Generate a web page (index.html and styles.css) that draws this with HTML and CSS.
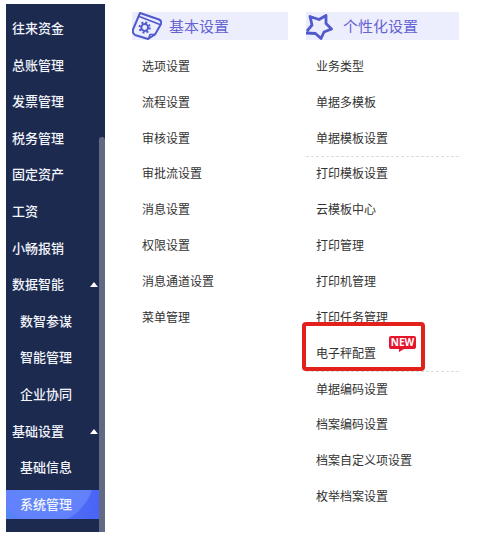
FILE: index.html
```html
<!DOCTYPE html>
<html lang="zh-CN">
<head>
<meta charset="utf-8">
<title>系统管理</title>
<link rel="stylesheet" href="styles.css">
</head>
<body>
<nav class="sidebar">
  <ul class="menu">
    <li><a href="#">往来资金</a></li>
    <li><a href="#">总账管理</a></li>
    <li><a href="#">发票管理</a></li>
    <li><a href="#">税务管理</a></li>
    <li><a href="#">固定资产</a></li>
    <li><a href="#">工资</a></li>
    <li><a href="#">小畅报销</a></li>
    <li><a href="#" class="group">数据智能</a></li>
    <li><a href="#" class="child">数智参谋</a></li>
    <li><a href="#" class="child">智能管理</a></li>
    <li><a href="#" class="child">企业协同</a></li>
    <li><a href="#" class="group">基础设置</a></li>
    <li><a href="#" class="child">基础信息</a></li>
    <li><a href="#" class="child active">系统管理</a></li>
  </ul>
  <div class="scrollbar"></div>
</nav>
<main class="panel">
  <section class="column">
    <h2 class="heading">
      <svg class="icon" viewBox="0 0 30 28" fill="none" stroke="#5059ce" stroke-width="2" stroke-linejoin="round">
        <path d="M8 1 L27 7.5 Q30 9 29 12 L23 22.5 L16 27 L3 23 Q0 21 1 17.5 Z"/>
        <path d="M6 4 L28 12.5" stroke-width="1.8"/>
        <path d="M16.500 27 L18 22.500 L23 22.500" stroke-width="1.6"/>
        <circle cx="12.700" cy="15.500" r="3.400" stroke-width="2"/>
        <circle cx="12.700" cy="15.500" r="5.100" stroke-width="2" stroke-dasharray="2 2.005"/>
      </svg>
      基本设置
    </h2>
    <ul class="list">
      <li><a href="#">选项设置</a></li>
      <li><a href="#">流程设置</a></li>
      <li><a href="#">审核设置</a></li>
      <li><a href="#">审批流设置</a></li>
      <li><a href="#">消息设置</a></li>
      <li><a href="#">权限设置</a></li>
      <li><a href="#">消息通道设置</a></li>
      <li><a href="#">菜单管理</a></li>
    </ul>
  </section>
  <section class="column">
    <h2 class="heading">
      <svg class="icon" viewBox="0 0 30 28" fill="none" stroke="#5059ce" stroke-width="2.8" stroke-linejoin="round">
        <path d="M0 21 L9.500 21.500 L15 26.500 L18 20 L25.500 17 L20 11.500 L20 3.500 L13 7.500 L4 4.500 L6 13 L1 19"/>
      </svg>
      个性化设置
    </h2>
    <ul class="list">
      <li><a href="#">业务类型</a></li>
      <li><a href="#">单据多模板</a></li>
      <li class="divided"><a href="#">单据模板设置</a></li>
      <li><a href="#">打印模板设置</a></li>
      <li><a href="#">云模板中心</a></li>
      <li><a href="#">打印管理</a></li>
      <li><a href="#">打印机管理</a></li>
      <li><a href="#">打印任务管理</a></li>
      <li class="divided marked"><a href="#">电子秤配置</a><span class="badge">NEW</span></li>
      <li><a href="#">单据编码设置</a></li>
      <li><a href="#">档案编码设置</a></li>
      <li><a href="#">档案自定义项设置</a></li>
      <li><a href="#">枚举档案设置</a></li>
    </ul>
  </section>
</main>
</body>
</html>
```
FILE: styles.css
```css
*,
*::before,
*::after {
  box-sizing: border-box;
}

body {
  display: flex;
  min-height: 100vh;
  margin: 0;
  padding: 4px 25px 5px 6px;
  background: #fff;
  font-family: "Noto Sans CJK SC", sans-serif;
}

ul {
  margin: 0;
  padding: 0;
  list-style: none;
}

a {
  color: inherit;
  text-decoration: none;
}

.sidebar {
  display: flex;
  flex: 0 0 99px;
  background: #1d2a4f;
}

.menu {
  display: flex;
  flex: 1;
  flex-direction: column;
  justify-content: space-between;
  padding: 10px 0 13px;
}

.menu a {
  display: flex;
  align-items: center;
  justify-content: space-between;
  height: 29px;
  padding: 0 1px 2px 6px;
  color: #f1f4fb;
  font-size: 13px;
  font-weight: 500;
}

.menu .child {
  padding-left: 14px;
}

.menu .active {
  background:
    radial-gradient(circle at 38px -16px, #5e8bfa 0, #6380fb 50px, transparent 51px),
    linear-gradient(90deg, #5686f5, #4a63f6);
}

.group::after {
  content: "";
  margin-top: 2px;
  border: 4px solid transparent;
  border-top: 0;
  border-bottom: 5px solid #fff;
}

.scrollbar {
  width: 6px;
  margin-top: 133px;
  border-radius: 3px 3px 0 0;
  background: #626984;
}

.panel {
  display: grid;
  flex: 1;
  grid-template-columns: 156fr 153fr;
  gap: 18px;
  padding: 8px 0 17px 27px;
}

.column {
  display: flex;
  flex-direction: column;
}

.heading {
  display: flex;
  align-items: center;
  gap: 7px;
  height: 28px;
  margin: 0 0 9px;
  padding-bottom: 2px;
  background: #eceefd;
  color: #6563d3;
  font-size: 15px;
  font-weight: 400;
}

.icon {
  width: 30px;
  height: 28px;
  margin-bottom: -2px;
}

.list {
  display: grid;
  flex: 1;
  grid-template-rows: repeat(13, 1fr);
}

.list li {
  display: flex;
  position: relative;
  align-items: center;
  padding: 0 0 2px 10px;
  color: #333;
  font-size: 12px;
  line-height: 18px;
}

.divided::after {
  content: "";
  position: absolute;
  right: 0;
  bottom: 0;
  left: 0;
  border-bottom: 1px dashed #dcdce0;
}

.marked::before {
  content: "";
  position: absolute;
  z-index: 1;
  top: -14px;
  left: -4px;
  width: 123px;
  height: 49px;
  border: 4px solid #e3211c;
  border-radius: 4px;
}

.badge {
  position: absolute;
  top: 0;
  left: 83px;
  width: 27px;
  height: 13px;
  border-radius: 2px;
  background: #e5152c;
  color: #fff;
  font-family: "Open Sans", sans-serif;
  font-size: 10px;
  font-weight: 700;
  line-height: 13px;
  text-align: center;
}

.badge::after {
  content: "";
  position: absolute;
  top: 13px;
  left: 10px;
  border-top: 3px solid #e5152c;
  border-right: 5px solid transparent;
}
```
